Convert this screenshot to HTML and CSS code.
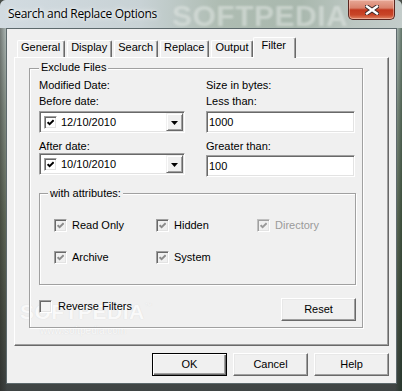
FILE: index.html
```html
<!DOCTYPE html>
<html>
<head>
<meta charset="utf-8">
<link rel="stylesheet" href="styles.css">
</head>
<body>
<div class="window">
  <div class="titlebar">
    <div class="title">Search and Replace Options</div>
    <div class="glass-mark">SOFTPEDIA</div>
    <div class="close">
      <svg width="14" height="10" viewBox="0 0 14 10">
        <path d="M2 1.5 L12 8.5 M12 1.5 L2 8.5" stroke="#3a2a2a" stroke-width="4.2" stroke-linecap="square"/>
        <path d="M2 1.5 L12 8.5 M12 1.5 L2 8.5" stroke="#ffffff" stroke-width="2.4" stroke-linecap="square"/>
      </svg>
    </div>
  </div>
  <div class="client">
    <div class="tabs">
      <div class="tab">General</div>
      <div class="tab">Display</div>
      <div class="tab">Search</div>
      <div class="tab">Replace</div>
      <div class="tab">Output</div>
      <div class="tab selected">Filter</div>
    </div>
    <div class="panel">
      <div class="group exclude">
        <div class="page-mark">SOFTPEDIA<sup>™</sup></div>
        <div class="page-url">www.softpedia.com</div>
        <div class="legend">Exclude Files</div>
        <div class="cols">
          <div class="col col-left">
            <div class="lbl">Modified Date:</div>
            <div class="lbl">Before date:</div>
            <div class="picker">
              <span class="cb"><svg width="7" height="7" viewBox="0 0 7 7"><path d="M0.6 3.2 L2.6 5.2 L6.6 1.2" stroke="#000" stroke-width="1.9" fill="none"/></svg></span>
              <span class="ptext">12/10/2010</span>
              <span class="drop"><svg width="7" height="4" viewBox="0 0 7 4"><path d="M0 0 H7 L3.5 4 Z" fill="#000"/></svg></span>
            </div>
            <div class="lbl gap">After date:</div>
            <div class="picker">
              <span class="cb"><svg width="7" height="7" viewBox="0 0 7 7"><path d="M0.6 3.2 L2.6 5.2 L6.6 1.2" stroke="#000" stroke-width="1.9" fill="none"/></svg></span>
              <span class="ptext">10/10/2010</span>
              <span class="drop"><svg width="7" height="4" viewBox="0 0 7 4"><path d="M0 0 H7 L3.5 4 Z" fill="#000"/></svg></span>
            </div>
          </div>
          <div class="col col-right">
            <div class="lbl">Size in bytes:</div>
            <div class="lbl">Less than:</div>
            <div class="textbox">1000</div>
            <div class="lbl gap tight">Greater than:</div>
            <div class="textbox">100</div>
          </div>
        </div>
        <div class="group attrs">
          <div class="legend legend-attrs">with attributes:</div>
          <div class="attr-grid">
            <div class="check"><span class="cb dis"><svg width="7" height="7" viewBox="0 0 7 7"><path d="M0.6 3.2 L2.6 5.2 L6.6 1.2" stroke="#8c8c8c" stroke-width="1.9" fill="none"/></svg></span>Read Only</div>
            <div class="check"><span class="cb dis"><svg width="7" height="7" viewBox="0 0 7 7"><path d="M0.6 3.2 L2.6 5.2 L6.6 1.2" stroke="#8c8c8c" stroke-width="1.9" fill="none"/></svg></span>Hidden</div>
            <div class="check disabled"><span class="cb dis light"><svg width="7" height="7" viewBox="0 0 7 7"><path d="M0.6 3.2 L2.6 5.2 L6.6 1.2" stroke="#9a9a9a" stroke-width="1.9" fill="none"/></svg></span>Directory</div>
            <div class="check"><span class="cb dis"><svg width="7" height="7" viewBox="0 0 7 7"><path d="M0.6 3.2 L2.6 5.2 L6.6 1.2" stroke="#8c8c8c" stroke-width="1.9" fill="none"/></svg></span>Archive</div>
            <div class="check"><span class="cb dis"><svg width="7" height="7" viewBox="0 0 7 7"><path d="M0.6 3.2 L2.6 5.2 L6.6 1.2" stroke="#8c8c8c" stroke-width="1.9" fill="none"/></svg></span>System</div>
          </div>
        </div>
        <div class="bottom-row">
          <div class="check reverse"><span class="cb blank"></span>Reverse Filters</div>
          <div class="btn">Reset</div>
        </div>
      </div>
    </div>
    <div class="buttons">
      <div class="btn default">OK</div>
      <div class="btn">Cancel</div>
      <div class="btn">Help</div>
    </div>
  </div>
</div>
</body>
</html>
```
FILE: styles.css
```css
* { box-sizing: border-box; }
html, body { margin: 0; padding: 0; }
body {
  width: 402px;
  height: 391px;
  overflow: hidden;
  font-family: "Liberation Sans", Arial, sans-serif;
  font-size: 11px;
  color: #000;
  background: #4a4f4a;
}
.window {
  width: 402px;
  height: 391px;
  position: relative;
  overflow: hidden;
  border-radius: 6px 6px 0 0;
  background:
    linear-gradient(90deg, rgba(30,30,25,0.45) 0, rgba(30,30,25,0.1) 6px, rgba(30,30,25,0) 7px, rgba(20,40,20,0) 395px, rgba(20,45,25,0.55) 402px),
    linear-gradient(180deg, #c9d3d8 0, #bcc8c6 28px, #8e9a90 110px, #66705f 220px, #4e544a 320px, #3f4444 391px);
}
.titlebar {
  height: 28px;
  display: flex;
  justify-content: space-between;
  align-items: flex-start;
  position: relative;
  background: linear-gradient(90deg, #d2dbe1 0%, #c8d2d5 35%, #aebcb2 55%, #a9b8ae 75%, #bcc7c2 88%, #c3ccca 100%);
}
.title {
  padding: 6px 0 0 8px;
  font-family: "Open Sans", "Noto Sans", sans-serif;
  font-size: 12px;
  line-height: 16px;
  letter-spacing: -0.3px;
  color: #000;
  text-shadow: 0 0 6px rgba(255,255,255,0.9), 0 0 3px rgba(255,255,255,0.8);
  position: relative;
  z-index: 1;
}
.glass-mark {
  position: absolute;
  left: 172px;
  top: 1px;
  font-family: "Liberation Sans", sans-serif;
  font-weight: bold;
  font-size: 30px;
  line-height: 30px;
  letter-spacing: 0.5px;
  color: rgba(225,232,228,0.55);
  filter: blur(1.2px);
}
.close {
  width: 47px;
  height: 20px;
  margin-right: 7px;
  border: 1px solid #5a2620;
  border-top: none;
  border-radius: 0 0 5px 5px;
  background: linear-gradient(180deg, #e7a896 0%, #d9826c 42%, #c2391f 52%, #c84528 78%, #df8463 100%);
  box-shadow: inset 0 0 0 1px rgba(255,220,210,0.45);
  display: flex;
  align-items: center;
  justify-content: center;
  position: relative;
  z-index: 1;
}
.client {
  position: relative;
  z-index: 0;
  margin-left: 6px;
  width: 391px;
  height: 356px;
  border: 1px solid #5d696c;
  background: #f0f0f0;
  padding: 8px 7px 0 7px;
}
.tabs {
  display: flex;
  align-items: flex-end;
  height: 20px;
  padding-left: 3px;
  gap: 2px;
  position: relative;
  z-index: 1;
}
.tab {
  height: 17px;
  padding: 0 4px 0 3px;
  line-height: 13px;
  border: 1px solid;
  border-color: #fff #696969 transparent #fff;
  border-bottom: none;
  border-radius: 2px 2px 0 0;
  box-shadow: inset -1px 0 #a0a0a0;
  background: #f0f0f0;
  white-space: nowrap;
}
.tab.selected {
  height: 21px;
  margin-bottom: -1px;
  margin-left: -2px;
  padding: 1px 9px 0 7px;
}
.panel {
  height: 289px;
  border: 1px solid;
  border-color: #fff #696969 #696969 #fff;
  box-shadow: inset -1px -1px #a0a0a0;
  padding: 10px 0 0 14px;
}
.group {
  position: relative;
  border: 1px solid #a0a0a0;
  box-shadow: inset 1px 1px #fff, 1px 1px #fff;
}
.exclude {
  width: 334px;
  height: 260px;
  padding: 10px 0 0 9px;
}
.legend {
  position: absolute;
  left: 9px;
  top: -8px;
  padding: 0 2px;
  line-height: 13px;
  background: #f0f0f0;
}
.legend-attrs {
  left: 8px;
  top: -7px;
}
.cols {
  display: flex;
  gap: 21px;
}
.col { display: flex; flex-direction: column; }
.col-left { width: 146px; }
.col-right { width: 149px; }
.lbl {
  line-height: 13px;
  height: 13px;
  margin-bottom: 3px;
  white-space: nowrap;
}
.lbl.gap { margin-top: 7px; margin-bottom: 0; }
.lbl.tight { margin-bottom: 2px; }
.picker, .textbox {
  height: 22px;
  border: 1px solid;
  border-color: #a0a0a0 #fff #fff #a0a0a0;
  box-shadow: inset 1px 1px #696969, inset -1px -1px #e3e3e3;
  background: #fff;
}
.picker {
  display: flex;
  align-items: center;
  padding: 1px 1px 1px 4px;
}
.ptext { margin-left: 4px; line-height: 13px; }
.drop {
  margin-left: auto;
  width: 17px;
  height: 18px;
  border: 1px solid;
  border-color: #f0f0f0 #696969 #696969 #f0f0f0;
  box-shadow: inset 1px 1px #fff, inset -1px -1px #a0a0a0;
  background: #f0f0f0;
  display: flex;
  align-items: center;
  justify-content: center;
  padding-top: 1px;
}
.textbox {
  padding: 0 0 0 2px;
  line-height: 20px;
}
.cb {
  flex: none;
  width: 13px;
  height: 13px;
  border: 1px solid;
  border-color: #a0a0a0 #fff #fff #a0a0a0;
  box-shadow: inset 1px 1px #696969, inset -1px -1px #e3e3e3;
  background: #fff;
  display: flex;
  align-items: center;
  justify-content: center;
}
.cb.dis { background: #f0f0f0; }
.cb.light { border-color: #c0c0c0 #fff #fff #c0c0c0; box-shadow: inset 1px 1px #a0a0a0, inset -1px -1px #e3e3e3; }
.cb.blank { background: #f4f4f4; }
.attrs {
  width: 317px;
  height: 92px;
  margin-top: 16px;
  padding: 25px 0 0 14px;
}
.attr-grid {
  display: grid;
  grid-template-columns: 102px 101px auto;
  grid-auto-rows: 13px;
  row-gap: 19px;
}
.check {
  display: flex;
  align-items: center;
  gap: 5px;
  line-height: 13px;
  white-space: nowrap;
}
.check.disabled { color: #9a9a9a; }
.bottom-row {
  width: 317px;
  margin-top: 13px;
  display: flex;
  justify-content: space-between;
  align-items: flex-start;
}
.reverse { margin-top: 2px; gap: 6px; }
.btn {
  width: 75px;
  height: 23px;
  display: flex;
  align-items: center;
  justify-content: center;
  line-height: 13px;
  padding-bottom: 1px;
  border: 1px solid;
  border-color: #fff #696969 #696969 #fff;
  box-shadow: inset -1px -1px #a0a0a0, inset 1px 1px #e8e8e8;
  background: #f0f0f0;
}
.btn.default {
  border-color: #000;
  box-shadow: inset 1px 1px #fff, inset -1px -1px #696969, inset -2px -2px #a0a0a0;
}
.buttons {
  display: flex;
  justify-content: flex-end;
  gap: 6px;
  margin-top: 7px;
}
.page-mark {
  position: absolute;
  z-index: -1;
  left: -10px;
  top: 226px;
  font-weight: bold;
  font-size: 21px;
  line-height: 22px;
  letter-spacing: 0.5px;
  color: #f9f9f9;
  text-shadow: 0 0 1px rgba(160,160,160,0.3);
}
.page-mark sup { font-size: 7px; vertical-align: 11px; font-weight: normal; }
.page-url {
  position: absolute;
  z-index: -1;
  left: 10px;
  top: 256px;
  font-size: 10px;
  line-height: 12px;
  color: #fafafa;
  text-shadow: 0 0 1px rgba(160,160,160,0.35);
}
```
